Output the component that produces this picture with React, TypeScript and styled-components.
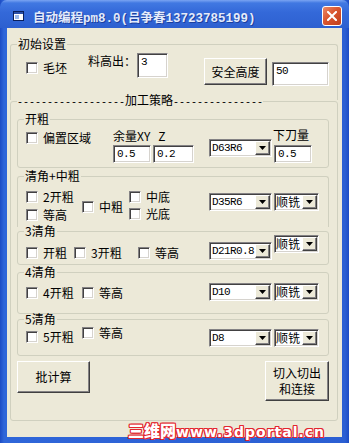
import React from "react";
import styled, { createGlobalStyle, css } from "styled-components";

const GlobalStyle = createGlobalStyle`
  body {
    margin: 0;
    background: #2c5fd4;
  }
`;

type Place = { $w?: number; $t?: number; $l?: number };

const place = css<Place>`
  flex: none;
  ${(p) => (p.$w !== undefined ? `width: ${p.$w}px;` : "")}
  margin-top: ${(p) => p.$t ?? 0}px;
  margin-left: ${(p) => p.$l ?? 0}px;
`;

const sunken = css`
  border: 1px solid;
  border-color: #848284 #fff #fff #848284;
  box-shadow: inset 1px 1px 0 #424142, inset -1px -1px 0 #d6d3ce;
`;

const raised = css`
  border: 1px solid;
  border-color: #fff #404040 #404040 #fff;
  box-shadow: inset -1px -1px 0 #848284;
  background: #ece9d8;
`;

const Window = styled.div`
  position: relative;
  width: 349px;
  height: 443px;
  display: flex;
  flex-direction: column;
  background: linear-gradient(90deg, #1d4cc4, #2f66d9 4px, #2b5fd3 345px, #1d4cc4);
  font-family: "Noto Sans CJK SC", sans-serif;
  font-size: 12px;
  color: #000;
`;

const TitleBar = styled.div`
  height: 28px;
  box-sizing: border-box;
  padding: 4px 7px 0 13px;
  display: flex;
  align-items: center;
  border-radius: 7px 7px 0 0;
  background: linear-gradient(#7aa4f2 0, #4178e2 3px, #3469d9 12px, #2d60d0 28px);
`;

const TitleText = styled.span`
  margin-left: 9px;
  font-family: "Liberation Mono", "Noto Sans CJK SC", monospace;
  font-weight: bold;
  font-size: 12.5px;
  color: #e4ebfb;
  text-shadow: 1px 1px 0 #1b3f9e;
  white-space: nowrap;
`;

const CloseBtn = styled.div`
  margin-left: auto;
  width: 20px;
  height: 20px;
  box-sizing: border-box;
  border: 1px solid #fff;
  border-radius: 3px;
  background: linear-gradient(135deg, #ec8a68, #d9552f 45%, #c13f1c);
  display: flex;
  align-items: center;
  justify-content: center;
`;

const Client = styled.div`
  flex: 1;
  margin: 0 7px 6px;
  padding: 9px 0 0 3px;
  background: #ece9d8;
`;

const GroupBox = styled.fieldset<{ $w: number; $h: number; $t?: number; $open?: boolean; $pr?: number }>`
  box-sizing: border-box;
  min-width: 0;
  width: ${(p) => p.$w}px;
  height: ${(p) => p.$h}px;
  margin: ${(p) => p.$t ?? 0}px 0 0;
  padding: 0 ${(p) => p.$pr ?? 0}px 0 6px;
  border: 1px solid #d0d0bf;
  border-radius: 3px;
  ${(p) =>
    p.$open &&
    css`
      border-bottom: none;
      border-bottom-left-radius: 0;
      border-bottom-right-radius: 0;
    `}
`;

const Caption = styled.legend<{ $flat?: boolean }>`
  padding: ${(p) => (p.$flat ? "0" : "0 1px")};
  font-size: 12px;
  line-height: 14px;
  white-space: nowrap;
`;

const Dashes = styled.span`
  font-family: "Liberation Mono", monospace;
  font-size: 10px;
`;

const Row = styled.div<{ $pl?: number; $t?: number }>`
  display: flex;
  align-items: flex-start;
  padding-left: ${(p) => p.$pl ?? 0}px;
  margin-top: ${(p) => p.$t ?? 0}px;
`;

const Col = styled.div<Place>`
  ${place};
  display: flex;
  flex-direction: column;
  align-items: flex-start;
`;

const Label = styled.span<Place>`
  ${place};
  line-height: 14px;
  white-space: pre;
`;

const Check = styled.label<Place>`
  ${place};
  display: flex;
  align-items: center;
  gap: 5px;
  height: 12px;
  line-height: 12px;
  white-space: nowrap;
`;

const CheckBox = styled.span`
  flex: none;
  width: 12px;
  height: 12px;
  box-sizing: border-box;
  ${sunken};
  background: #fff;
`;

const Field = styled.div<Place & { $h: number }>`
  ${place};
  height: ${(p) => p.$h}px;
  box-sizing: border-box;
  ${sunken};
  background: #fff;
  padding: 2px 0 0 3px;
  font-family: "Liberation Mono", monospace;
  font-size: 11px;
  line-height: 13px;
  letter-spacing: -0.6px;
`;

const ComboBox = styled.div<Place>`
  ${place};
  height: 18px;
  box-sizing: border-box;
  ${sunken};
  background: #fff;
  padding: 1px;
  display: flex;
`;

const ComboText = styled.span<{ $latin?: boolean }>`
  flex: 1;
  min-width: 0;
  white-space: nowrap;
  ${(p) =>
    p.$latin
      ? css`
          padding-left: 1px;
          font-family: "Liberation Mono", monospace;
          font-size: 11px;
          letter-spacing: -0.6px;
          line-height: 15px;
        `
      : css`
          font-size: 12px;
          line-height: 14px;
        `}
`;

const DropBtn = styled.span`
  flex: none;
  width: 15px;
  box-sizing: border-box;
  ${raised};
  display: flex;
  align-items: center;
  justify-content: center;
`;

const Btn = styled.button<Place & { $h: number }>`
  ${place};
  height: ${(p) => p.$h}px;
  box-sizing: border-box;
  ${raised};
  padding: 0;
  color: #000;
  font-family: "Noto Sans CJK SC", sans-serif;
  font-size: 12px;
  line-height: 16px;
`;

const ButtonRow = styled.div`
  display: flex;
  justify-content: space-between;
  align-items: flex-start;
  margin-top: 5px;
  width: 312px;
`;

const Watermark = styled.div`
  position: absolute;
  left: 128px;
  top: 422px;
  font-family: "DejaVu Sans", "Noto Sans CJK SC", sans-serif;
  font-weight: bold;
  font-size: 14px;
  line-height: 16px;
  letter-spacing: 1px;
  color: #fff;
  white-space: nowrap;
  text-shadow: 1px 0 0 #e3262f, -1px 0 0 #e3262f, 0 1px 0 #e3262f, 0 -1px 0 #e3262f,
    1px 1px 0 #e3262f, -1px -1px 0 #e3262f, 1px -1px 0 #e3262f, -1px 1px 0 #e3262f;

  b {
    font-family: "Noto Sans CJK SC", sans-serif;
    font-size: 16px;
    letter-spacing: 0;
  }
`;

const AppIcon = () => (
  <svg width="11" height="10" viewBox="0 0 11 10">
    <rect x="0.5" y="0.5" width="10" height="9" fill="#fff" stroke="#0a1f5c" />
    <rect x="1" y="1" width="9" height="2" fill="#2a4fa8" />
    <rect x="2" y="4" width="4" height="4" fill="#9bb8ea" />
  </svg>
);

const CloseIcon = () => (
  <svg width="10" height="10" viewBox="0 0 10 10">
    <path d="M1 1L9 9M9 1L1 9" stroke="#fff" strokeWidth="2" strokeLinecap="square" />
  </svg>
);

const Arrow = () => (
  <svg width="7" height="4" viewBox="0 0 7 4">
    <path d="M0 0h7L3.5 4z" fill="#000" />
  </svg>
);

const Combo = ({ text, latin, ...rest }: Place & { text: string; latin?: boolean }) => (
  <ComboBox {...rest}>
    <ComboText $latin={latin}>{text}</ComboText>
    <DropBtn>
      <Arrow />
    </DropBtn>
  </ComboBox>
);

const Tick = ({ label, ...rest }: Place & { label: string }) => (
  <Check {...rest}>
    <CheckBox />
    {label}
  </Check>
);

const InputPair = styled.div`
  display: flex;
  gap: 2px;
  margin-top: 2px;
`;

export default function App() {
  return (
    <>
      <GlobalStyle />
      <Window>
        <TitleBar>
          <AppIcon />
          <TitleText>自动编程pm8.0(吕争春13723785199)</TitleText>
          <CloseBtn>
            <CloseIcon />
          </CloseBtn>
        </TitleBar>

        <Client>
          <GroupBox $w={328} $h={63} $pr={8} $open>
            <Caption>初始设置</Caption>
            <Row $pl={9}>
              <Tick $w={62} $t={11} label="毛坯" />
              <Label $w={49} $t={3}>料高出：</Label>
              <Field $w={31} $h={25} $t={2}>3</Field>
              <Btn $w={63} $h={27} $t={7} $l={36}>安全高度</Btn>
              <Field $w={57} $h={24} $t={11} $l={5}>50</Field>
            </Row>
          </GroupBox>

          <GroupBox $w={328} $h={328} $t={-7} $pr={8}>
            <Caption $flat>
              <Dashes>------------------</Dashes>加工策略<Dashes>---------------</Dashes>
            </Caption>

            <GroupBox $w={312} $h={56} $t={2}>
              <Caption>开粗</Caption>
              <Row $pl={2}>
                <Tick $w={87} $t={6} label="偏置区域" />
                <Col $w={96}>
                  <Label $t={3}>{"余量XY   Z"}</Label>
                  <InputPair>
                    <Field $w={38} $h={18}>0.5</Field>
                    <Field $w={41} $h={18}>0.2</Field>
                  </InputPair>
                </Col>
                <Combo $w={63} $t={13} text="D63R6" latin />
                <Col $l={1}>
                  <Label $t={2}>下刀量</Label>
                  <Field $w={38} $h={18} $t={3} $l={1}>0.5</Field>
                </Col>
              </Row>
            </GroupBox>

            <GroupBox $w={312} $h={58} $t={1} $open>
              <Caption>清角+中粗</Caption>
              <Row $pl={2}>
                <Col $w={56}>
                  <Tick $t={8} label="2开粗" />
                  <Tick $t={6} label="等高" />
                </Col>
                <Tick $w={47} $t={18} label="中粗" />
                <Col $w={80}>
                  <Tick $t={8} label="中底" />
                  <Tick $t={5} label="光底" />
                </Col>
                <Combo $w={63} $t={10} text="D35R6" latin />
                <Combo $w={45} $t={10} $l={2} text="顺铣" />
              </Row>
            </GroupBox>

            <GroupBox $w={312} $h={41} $t={-3}>
              <Caption>3清角</Caption>
              <Row $pl={2}>
                <Tick $w={48} $t={9} label="开粗" />
                <Tick $w={64} $t={9} label="3开粗" />
                <Tick $w={71} $t={9} label="等高" />
                <Combo $w={63} $t={4} text="D21R0.8" latin />
                <Combo $w={45} $t={-3} $l={2} text="顺铣" />
              </Row>
            </GroupBox>

            <GroupBox $w={312} $h={49}>
              <Caption>4清角</Caption>
              <Row $pl={2}>
                <Tick $w={56} $t={8} label="4开粗" />
                <Tick $w={127} $t={8} label="等高" />
                <Combo $w={63} $t={4} text="D10" latin />
                <Combo $w={45} $t={4} $l={2} text="顺铣" />
              </Row>
            </GroupBox>

            <GroupBox $w={312} $h={44} $t={-2}>
              <Caption>5清角</Caption>
              <Row $pl={2}>
                <Tick $w={56} $t={5} label="5开粗" />
                <Tick $w={127} $t={1} label="等高" />
                <Combo $w={63} $t={3} text="D8" latin />
                <Combo $w={45} $t={3} $l={2} text="顺铣" />
              </Row>
            </GroupBox>

            <ButtonRow>
              <Btn $w={73} $h={32}>批计算</Btn>
              <Btn $w={64} $h={40}>
                切入切出
                <br />
                和连接
              </Btn>
            </ButtonRow>
          </GroupBox>
        </Client>

        <Watermark>
          <b>三维网</b>www.3dportal.cn
        </Watermark>
      </Window>
    </>
  );
}
